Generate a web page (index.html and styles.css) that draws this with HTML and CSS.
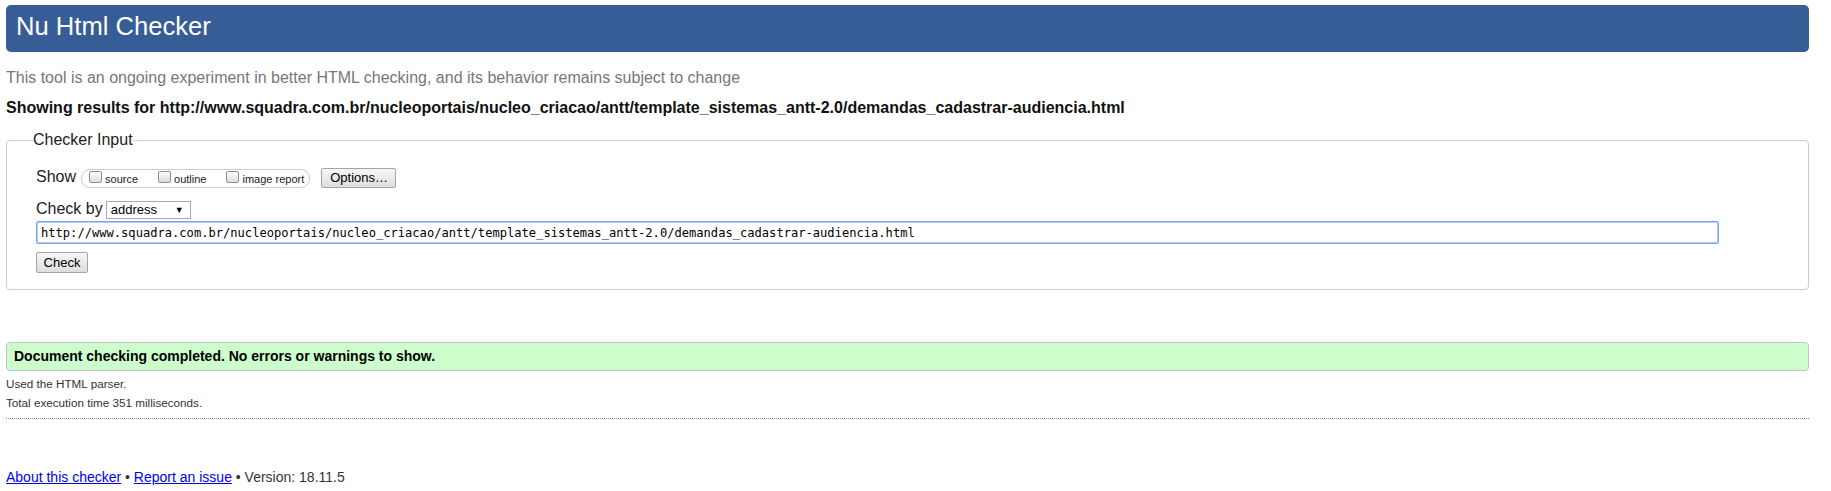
FILE: index.html
```html
<!DOCTYPE html>
<html lang="en">
<head>
<meta charset="utf-8">
<title>Nu Html Checker</title>
<link rel="stylesheet" href="styles.css">
</head>
<body>
<h1 class="title">Nu Html Checker</h1>
<p class="intro">This tool is an ongoing experiment in better HTML checking, and its behavior remains subject to change</p>
<p class="showing">Showing results for http://www.squadra.com.br/nucleoportais/nucleo_criacao/antt/template_sistemas_antt-2.0/demandas_cadastrar-audiencia.html</p>
<form class="checker-form">
  <fieldset class="checker">
    <legend class="checker-legend">Checker Input</legend>
    <div class="row row-show">
      <span class="label">Show</span>
      <div class="show-options">
        <label class="opt"><input type="checkbox" class="cb"><span class="opt-text">source</span></label>
        <label class="opt"><input type="checkbox" class="cb"><span class="opt-text">outline</span></label>
        <label class="opt"><input type="checkbox" class="cb"><span class="opt-text">image report</span></label>
      </div>
      <button type="button" class="btn btn-options">Options…</button>
    </div>
    <div class="row row-by">
      <span class="label">Check by</span>
      <span class="select">
        <select class="select-input"><option>address</option></select>
        <span class="arrow">▼</span>
      </span>
    </div>
    <input class="url" type="text" value="http://www.squadra.com.br/nucleoportais/nucleo_criacao/antt/template_sistemas_antt-2.0/demandas_cadastrar-audiencia.html">
    <button type="button" class="btn btn-check">Check</button>
  </fieldset>
</form>
<div class="success">Document checking completed. No errors or warnings to show.</div>
<div class="details">
  <p class="detail">Used the HTML parser.</p>
  <p class="detail">Total execution time 351 milliseconds.</p>
</div>
<hr class="sep">
<p class="footer"><a class="link" href="#">About this checker</a> • <a class="link" href="#">Report an issue</a> • Version: 18.11.5</p>
</body>
</html>
```

FILE: styles.css
```css
* { box-sizing: border-box; }
html, body { margin: 0; padding: 0; background: #fff; }
body {
  padding: 5px 22px 0 6px;
  font-family: "Liberation Sans", Arial, sans-serif;
  font-size: 16px;
  color: #000;
}
.title {
  margin: 0;
  height: 47px;
  padding: 2px 10px 6px;
  line-height: 39px;
  font-size: 25.6px;
  font-weight: normal;
  color: #fff;
  background: #365d95;
  border-radius: 5px;
}
.intro {
  margin: 17px 0 0;
  line-height: 18px;
  color: #777;
}
.showing {
  margin: 12px 0 0;
  line-height: 18px;
  font-weight: bold;
  color: #111;
}
.checker-form { margin: 14px 0 0; }
.checker {
  margin: 0;
  padding: 0 0 16px 29px;
  min-width: 0;
  border: 1px solid #ccc;
  border-radius: 4px;
}
.checker-legend {
  padding: 0;
  margin-left: -3px;
  line-height: 18px;
  font-size: 16px;
  color: #222;
}
.row { display: flex; align-items: center; }
.row-show { margin-top: 17px; height: 24px; }
.label { line-height: 16px; margin-bottom: 2px; color: #222; }
.show-options {
  display: flex;
  gap: 20px;
  height: 19px;
  margin-left: 5px;
  padding: 0 5px 0 7px;
  border: 1px solid #ccc;
  border-radius: 9px;
}
.opt {
  display: flex;
  align-items: flex-start;
  font-size: 11px;
  color: #222;
}
.cb {
  -webkit-appearance: none;
  appearance: none;
  margin: 1px 3px 0 0;
  width: 13px;
  height: 12px;
  border: 1px solid #8e8f8f;
  border-radius: 2px;
  background: linear-gradient(#fcfcfc, #dcdcdc);
}
.opt-text { padding-top: 2px; line-height: 15px; }
.btn {
  font-family: inherit;
  font-size: 13px;
  color: #000;
  background: linear-gradient(#f6f6f6, #dedede);
  border: 1px solid #a5a5a5;
  border-radius: 2px;
  padding: 0 8px;
  line-height: 18px;
}
.btn-options { margin-left: 11px; height: 20px; width: 75px; }
.row-by { margin-top: 10px; height: 20px; }
.select {
  display: flex;
  align-items: center;
  margin-left: 3px;
  width: 85px;
  height: 18px;
  border: 1px solid #a9a9a9;
  background: #fff;
}
.select-input {
  -webkit-appearance: none;
  appearance: none;
  flex: 1;
  min-width: 0;
  height: 16px;
  margin: 0;
  padding: 0 0 0 4px;
  border: 0;
  background: transparent;
  font-family: inherit;
  font-size: 13px;
  line-height: 16px;
  color: #000;
}
.arrow { font-size: 9px; margin-right: 6px; color: #000; }
.url {
  display: block;
  margin: 1px 0 0;
  width: 95%;
  height: 23px;
  padding: 0 4px;
  font-family: "DejaVu Sans Mono", "Liberation Mono", monospace;
  font-size: 12.1px;
  color: #000;
  border: 1px solid #7da6ea;
  box-shadow: inset 0 0 0 1px #b2ccf4;
  border-radius: 2px;
  outline: none;
}
.btn-check {
  display: block;
  margin-top: 8px;
  height: 21px;
  width: 52px;
  padding: 0;
}
.success {
  margin-top: 52px;
  height: 29px;
  padding: 0 7px;
  line-height: 27px;
  font-size: 14px;
  font-weight: bold;
  background: #ccffcc;
  border: 1px solid #c3c3c3;
  border-radius: 4px;
}
.details { margin-top: 3px; }
.detail {
  margin: 0;
  line-height: 19px;
  font-size: 11.7px;
  color: #333;
}
.sep {
  margin: 6px 0 0;
  height: 0;
  border: 0;
  border-top: 1px dotted #888;
}
.footer {
  margin: 48px 0 0;
  line-height: 20px;
  font-size: 14px;
  color: #333;
}
.link { color: #0000ee; text-decoration: underline; }
```
